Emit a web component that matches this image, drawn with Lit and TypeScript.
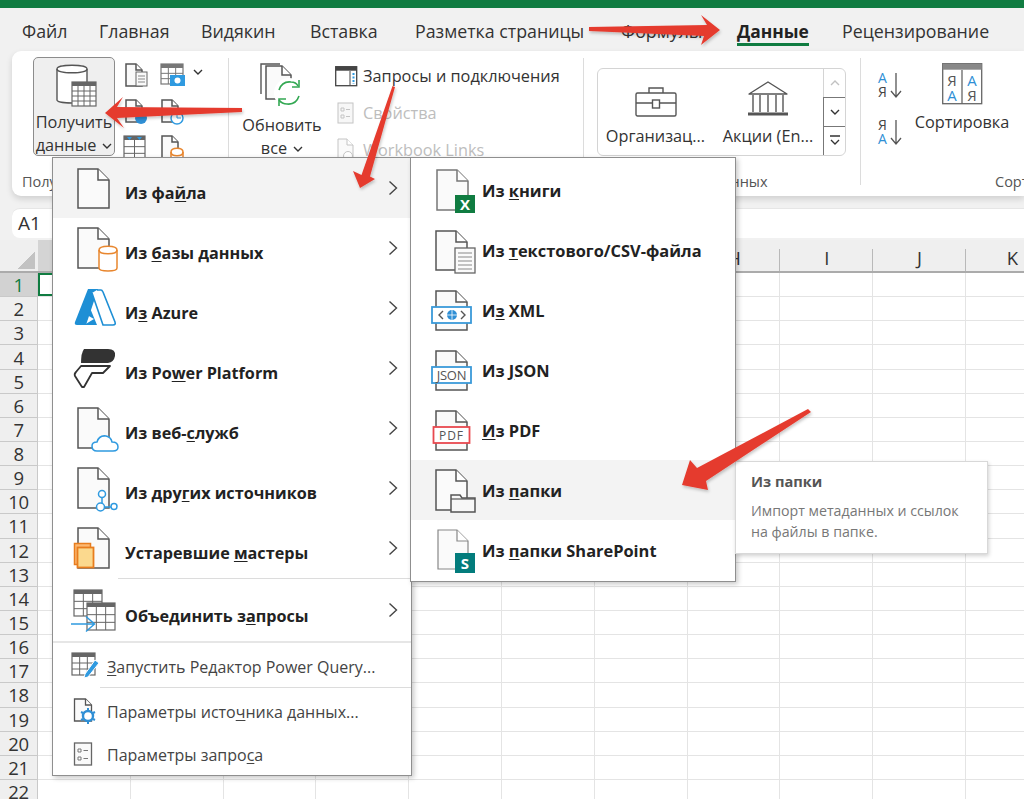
import { css, html, svg, LitElement } from "lit";
import { customElement } from "lit/decorators.js";
import { map } from "lit/directives/map.js";

const TABS = [
  "Файл",
  "Главная",
  "Видякин",
  "Вставка",
  "Разметка страницы",
  "Формулы",
  "Данные",
  "Рецензирование",
];

const COLS = "ABCDEFGHIJK".split("");
const ROWS = Array.from({ length: 22 }, (_, i) => i + 1);

const INK = "#555";

// page with a folded corner
const doc = (x: number, y: number, w: number, h: number, fold = 11, ink = INK, sw = 1.5) => svg`
  <path d="M${x} ${y}H${x + w - fold}L${x + w} ${y + fold}V${y + h}H${x}Z" fill="#fafafa" stroke=${ink} stroke-width=${sw} />
  <path d="M${x + w - fold} ${y}V${y + fold}H${x + w}" fill="#fff" stroke=${ink} stroke-width=${sw} />
`;

const table = (x: number, y: number, w: number, h: number, cols = 3, rows = 3, ink = "#666") => {
  const cw = w / cols;
  const rh = (h - 4) / rows;
  return svg`
    <rect x=${x} y=${y} width=${w} height=${h} fill="#fff" stroke=${ink} stroke-width="1.2" />
    <rect x=${x} y=${y} width=${w} height="4" fill=${ink} />
    ${map(Array.from({ length: cols - 1 }), (_, i) => svg`<path d="M${x + cw * (i + 1)} ${y + 4}V${y + h}" stroke=${ink} />`)}
    ${map(Array.from({ length: rows - 1 }), (_, i) => svg`<path d="M${x} ${y + 4 + rh * (i + 1)}H${x + w}" stroke=${ink} />`)}
  `;
};

const cylinder = (x: number, y: number, w: number, h: number, ink: string, fill = "#fff", sw = 1.5) => svg`
  <path d="M${x} ${y + 4}C${x} ${y - 1} ${x + w} ${y - 1} ${x + w} ${y + 4}V${y + h - 3}C${x + w} ${y + h + 1} ${x} ${y + h + 1} ${x} ${y + h - 3}Z" fill=${fill} stroke=${ink} stroke-width=${sw} />
  <path d="M${x} ${y + 4}C${x} ${y + 9} ${x + w} ${y + 9} ${x + w} ${y + 4}" fill="none" stroke=${ink} stroke-width=${sw} />
`;

const icon = (w: number, h: number, body: unknown) =>
  html`<svg class="ico" width=${w} height=${h} viewBox="0 0 ${w} ${h}">${body}</svg>`;

const chev = html`<svg class="chev" width="10" height="16" viewBox="0 0 10 16"><path d="M1.5 1.5L8.5 8L1.5 14.5" fill="none" stroke="#444" stroke-width="1.4" /></svg>`;
const caret = html`<svg class="caret" width="10" height="6" viewBox="0 0 10 6"><path d="M1 1L5 5L9 1" fill="none" stroke="#333" stroke-width="1.4" /></svg>`;

const dataBox = (x: number, w: number, ink: string, y = 19, h = 16) => svg`
  <rect x=${x} y=${y} width=${w} height=${h} fill="#fff" stroke=${ink} stroke-width="1.8" />
`;

const MAIN = [
  { label: html`Из фа<u>й</u>ла`, hot: true, ico: doc(8, 3, 31, 39) },
  { label: html`Из <u>б</u>азы данных`, ico: svg`${doc(8, 2, 31, 40)}${cylinder(29, 20, 18, 25, "#e8862e")}` },
  {
    label: html`И<u>з</u> Azure`,
    ico: svg`
      <path d="M18 3H28L16 39H7Q4 39 5 36Z" fill="#1e8fd5" />
      <path d="M20 22L27 39H14L24 33L17 29Z" fill="#1e8fd5" />
      <path d="M27 4H31Q32 4 33 6L45 36Q46 39 43 39H33L22 7" fill="#fff" stroke="#1e8fd5" stroke-width="1.6" />
    `,
  },
  {
    label: html`Из Po<u>w</u>er Platform`,
    ico: svg`
      <path d="M14 3H38Q46 3 45 10Q44 16 38 17H11Q11 7 14 3Z" fill="#333" />
      <path d="M11 20H40L33 27H22L14 41H12L5 30Q4 28 6 26Z" fill="#fff" stroke="#333" stroke-width="1.8" stroke-linejoin="round" />
    `,
  },
  {
    label: html`Из веб-<u>с</u>лужб`,
    ico: svg`
      ${doc(8, 2, 31, 40)}
      <path d="M27 45Q22 45 22 40Q22 36 27 36Q29 29 36 30Q41 31 42 36Q48 36 48 41Q48 45 43 45Z" fill="#fff" stroke="#2f9ae0" stroke-width="1.5" />
    `,
  },
  {
    label: html`Из дру<u>г</u>их источников`,
    ico: svg`
      ${doc(8, 2, 31, 40)}
      <path d="M32 32V37M34 41H41" stroke="#2f9ae0" stroke-width="1.5" />
      <circle cx="32" cy="28" r="3.5" fill="#fff" stroke="#2f9ae0" stroke-width="1.5" />
      <circle cx="30.5" cy="41" r="4" fill="#fff" stroke="#2f9ae0" stroke-width="1.5" />
      <circle cx="44" cy="40.5" r="3" fill="#fff" stroke="#2f9ae0" stroke-width="1.5" />
    `,
  },
  {
    label: html`Устаревшие <u>м</u>астеры`,
    ico: svg`
      ${doc(8, 2, 31, 40)}
      <rect x="4.5" y="17.5" width="16" height="21" fill="#fcb972" stroke="#e87d1e" stroke-width="1.5" />
      <rect x="7.5" y="21.5" width="16" height="20" fill="#fbd98e" stroke="#e87d1e" stroke-width="1.8" />
    `,
  },
  {
    label: html`Объединить з<u>а</u>просы`,
    tall: true,
    ico: svg`
      ${table(4, 2, 28, 26)}
      ${table(17, 15, 28, 27)}
      <path d="M1 36H24M16 28.5L24.5 36L16 43.5" fill="none" stroke="#2f9ae0" stroke-width="1.5" />
    `,
  },
];

const MINOR = [
  {
    label: html`<u>З</u>апустить Редактор Power Query...`,
    h: 44,
    ico: svg`
      ${table(2, 3, 23, 22, 3, 3)}
      <path d="M15 24L25 10L29 13L18 27L14 28Z" fill="#2f9ae0" stroke="#fff" />
    `,
  },
  {
    label: html`Параметры исто<u>ч</u>ника данных...`,
    h: 45,
    ico: svg`
      ${doc(4.5, 3, 17, 22, 6, "#555", 1.3)}
      <circle cx="18" cy="20" r="5" fill="#fff" stroke="#2f8fd5" stroke-width="2.4" />
      <path d="M18 12V14M18 26V28M11 16L13 17M25 24L23 23M11 24L13 23M25 16L23 17" stroke="#2f8fd5" stroke-width="2" />
    `,
  },
  {
    label: html`Параметры запро<u>с</u>а`,
    h: 41,
    ico: svg`
      <rect x="4.5" y="4" width="17" height="22" fill="#fafafa" stroke="#666" stroke-width="1.3" />
      <path d="M8 10h3v3h-3zM8 18h3v3h-3z" fill="#fff" stroke="#777" />
      <path d="M13.5 11.5H18M13.5 19.5H18" stroke="#777" />
    `,
  },
];

const globe = svg`
  <circle cx="27" cy="27" r="5" fill="#2f8fd5" />
  <path d="M22 27H32M27 22V32" stroke="#fff" stroke-width=".8" />
  <path d="M18 23L14 27L18 31M36 23L40 27L36 31" fill="none" stroke="#555" stroke-width="1.4" />
`;

const FILES = [
  {
    label: html`Из <u>к</u>ниги`,
    ico: svg`
      ${doc(12, 2, 31, 40, 11, "#777")}
      <rect x="30" y="27" width="20" height="18" fill="#107c41" />
      <text x="40" y="41.5" class="badge">X</text>
    `,
  },
  {
    label: html`Из <u>т</u>екстового/CSV-файла`,
    ico: svg`
      ${doc(11, 3, 31, 39)}
      <rect x="30" y="20" width="20" height="25" fill="#fafafa" stroke="#666" stroke-width="1.3" />
      <path d="M33 25H47M33 29H47M33 33H47M33 37H47M33 41H47" stroke="#888" />
    `,
  },
  {
    label: html`И<u>з</u> XML`,
    ico: svg`${doc(11, 3, 31, 39)}${dataBox(7, 39, "#3a9ad9")}${globe}`,
  },
  {
    label: html`Из <u>J</u>SON`,
    ico: svg`${doc(11, 3, 31, 39)}${dataBox(7, 39, "#3a9ad9")}<text x="26.5" y="32" class="tag" font-size="13" letter-spacing="-.3">JSON</text>`,
  },
  {
    label: html`<u>И</u>з PDF`,
    ico: svg`${doc(11, 3, 31, 39)}${dataBox(8.5, 36, "#e8494f")}<text x="26.5" y="32" class="tag" font-size="12" letter-spacing="1">PDF</text>`,
  },
  {
    label: html`Из <u>п</u>апки`,
    hot: true,
    ico: svg`
      ${doc(11, 2, 31, 40)}
      <path d="M26 44V27H35L37 30H50V44Z" fill="#f7f7f7" stroke="#555" stroke-width="1.5" />
      <path d="M26 31H50" stroke="#555" stroke-width="1.2" />
    `,
  },
  {
    label: html`Из <u>п</u>апки SharePoint`,
    ico: svg`
      ${doc(13, 2, 30, 39, 11, "#888", 1.2)}
      <rect x="30" y="25" width="20" height="20" fill="#037c7c" />
      <text x="40" y="41" class="badge">S</text>
    `,
  },
];

@customElement("app-root")
export class AppRoot extends LitElement {
  static styles = css`
    :host {
      display: block;
      position: relative;
      width: 1024px;
      height: 799px;
      overflow: hidden;
      background: #f1f1f1;
      font-family: "Open Sans", "Liberation Sans", sans-serif;
      color: #333;
    }
    svg {
      display: block;
      overflow: visible;
      flex: none;
    }
    svg text {
      font-family: "Open Sans", sans-serif;
      font-weight: 400;
    }
    svg text.badge {
      fill: #fff;
      font-size: 15px;
      font-weight: 700;
      text-anchor: middle;
    }
    .tag {
      fill: #555;
      text-anchor: middle;
    }
    .title {
      height: 8px;
      background: #107c41;
    }

    .tabs {
      display: grid;
      grid-template-columns: 77px 102px 109px 105px 206px 116px 105px 180px;
      height: 43px;
      padding-left: 22px;
      align-items: center;
      font-size: 17.8px;
    }
    .tab {
      position: relative;
      white-space: nowrap;
      padding-top: 2px;
    }
    .tab.on {
      font-weight: 700;
      font-size: 17.4px;
      color: #222;
      justify-self: start;
    }
    .tab.on::after {
      content: "";
      position: absolute;
      left: 0;
      right: 0;
      bottom: -3px;
      height: 3px;
      background: #107c41;
    }

    .ribbon {
      display: flex;
      height: 145px;
      margin-left: 12px;
      background: #fff;
      border-radius: 9px 0 0 9px;
      box-shadow: 0 3px 6px rgba(0, 0, 0, 0.14);
      font-size: 16.3px;
      overflow: hidden;
    }
    .sep {
      flex: none;
      width: 1px;
      height: 127px;
      margin-top: 7px;
      background: #dcdcdc;
    }
    .group {
      position: relative;
      flex: none;
      display: flex;
      flex-direction: column;
    }
    .g-body {
      flex: none;
      height: 121px;
      display: flex;
    }
    .g-name {
      font-size: 14.5px;
      color: #555;
      white-space: nowrap;
    }
    .g1 {
      width: 216px;
    }
    .g1 .g-name {
      padding-left: 10px;
    }
    .big {
      flex: none;
      width: 82px;
      height: 99px;
      margin: 6px 0 0 21px;
      box-sizing: border-box;
      border: 1px solid #8c8c8c;
      border-radius: 5px;
      background: #efefef;
      display: flex;
      flex-direction: column;
      align-items: center;
      line-height: 23px;
      text-align: center;
    }
    .big svg.ico {
      margin: 6px 0 3px 3px;
    }
    .big span,
    .refresh span {
      display: flex;
      align-items: center;
      gap: 6px;
      white-space: nowrap;
    }
    .smalls {
      display: grid;
      grid-template-columns: 36px 70px;
      grid-auto-rows: 37px;
      margin: 11px 0 0 9px;
    }
    .smalls .caret {
      margin: 7px 0 0 7px;
    }
    .pair {
      display: flex;
    }

    .g2 {
      width: 354px;
    }
    .g2 .g-body {
      padding-top: 12px;
      box-sizing: border-box;
    }
    .refresh {
      flex: none;
      width: 106px;
      display: flex;
      flex-direction: column;
      align-items: center;
      line-height: 23px;
    }
    .refresh svg.ico {
      margin-bottom: 7px;
    }
    .links {
      display: flex;
      flex-direction: column;
      gap: 15px;
      padding-top: 2px;
    }
    .link {
      display: flex;
      align-items: center;
      gap: 6px;
      height: 22px;
      white-space: nowrap;
    }
    .link.off {
      color: #bdbdbd;
    }

    .g3 {
      width: 276px;
    }
    .g3 .g-name {
      padding-left: 89px;
    }
    .gallery {
      flex: none;
      display: flex;
      width: 249px;
      height: 88px;
      margin: 17px 0 0 13px;
      box-sizing: border-box;
      border: 1px solid #d4d4d4;
      border-radius: 6px;
      overflow: hidden;
    }
    .gal {
      flex: none;
      display: flex;
      flex-direction: column;
      align-items: center;
      justify-content: flex-end;
      height: 78px;
      white-space: nowrap;
    }
    .gal svg.ico {
      margin-bottom: 8px;
    }
    .gal.org {
      width: 115px;
    }
    .gal.stock {
      width: 110px;
    }
    .spin {
      flex: none;
      width: 22px;
      margin-left: auto;
      display: flex;
      flex-direction: column;
      border-left: 1px solid #d4d4d4;
    }
    .spin div {
      flex: 1;
      display: flex;
      align-items: center;
      justify-content: center;
    }
    .spin div + div {
      border-top: 1px solid #777;
      margin-left: -1px;
      border-left: 1px solid #777;
    }
    .spin div:first-child svg {
      transform: scaleY(-1);
      opacity: 0.3;
    }

    .g4 {
      flex: 1;
    }
    .g4 .g-name {
      padding-left: 134px;
    }
    .az {
      flex: none;
      display: flex;
      flex-direction: column;
      gap: 21px;
      margin: 21px 0 0 17px;
    }
    .sort {
      flex: none;
      display: flex;
      flex-direction: column;
      align-items: center;
      width: 96px;
      margin: 12px 0 0 10px;
      white-space: nowrap;
    }
    .sort svg.ico {
      margin-bottom: 6px;
    }

    .formula {
      height: 30px;
      margin-top: 12px;
      background: #fff;
      border-top: 1px solid #e6e6e6;
      border-radius: 8px 0 0 8px;
      margin-left: 12px;
      font-size: 19px;
      line-height: 29px;
      padding-left: 6px;
      box-sizing: border-box;
    }

    .sheet {
      margin-top: 2px;
      display: grid;
      grid-template-columns: 38px repeat(11, 92.8px);
      grid-template-rows: 33px repeat(22, 24.15px);
      background: #fff;
    }
    .corner,
    .head {
      background: #efefef;
      border-bottom: 2px solid #ababab;
      box-sizing: border-box;
    }
    .corner {
      position: relative;
    }
    .corner::after {
      content: "";
      position: absolute;
      right: 3px;
      bottom: 2px;
      width: 17px;
      height: 17px;
      background: linear-gradient(135deg, transparent 50%, #c2c2c2 50%);
    }
    .head {
      display: flex;
      align-items: center;
      justify-content: center;
      font-size: 18.5px;
      padding-top: 4px;
      background-image: linear-gradient(#b9b9b9, #b9b9b9);
      background-size: 1px 22px;
      background-position: right bottom;
      background-repeat: no-repeat;
    }
    .head.sel {
      background-color: #d4d4d4;
    }
    .num {
      display: flex;
      align-items: center;
      justify-content: center;
      font-size: 18.5px;
      letter-spacing: -0.4px;
      background: #efefef;
      border-bottom: 1px solid #c9c9c9;
      border-right: 1px solid #c9c9c9;
      box-sizing: border-box;
    }
    .num.sel {
      background: #d2d2d2;
      color: #107c41;
    }
    .cell {
      border-right: 1px solid #e4e4e4;
      border-bottom: 1px solid #e4e4e4;
      box-sizing: border-box;
    }
    .cell.sel {
      box-shadow: inset 0 0 0 2px #107c41;
    }

    .menu {
      position: absolute;
      top: 157px;
      box-sizing: border-box;
      background: #fff;
      border: 1px solid #8f8f8f;
      box-shadow: 2px 2px 5px rgba(0, 0, 0, 0.22);
      font-size: 16.2px;
      color: #222;
    }
    .menu.main {
      left: 52px;
      width: 360px;
      height: 619px;
    }
    .menu.files {
      left: 410px;
      width: 326px;
      height: 425px;
      padding-top: 2px;
      font-size: 16.4px;
    }
    .row {
      display: flex;
      align-items: center;
      height: 60px;
      padding-left: 17px;
      font-weight: 700;
      white-space: nowrap;
    }
    .row.hot {
      background: #f3f3f3;
    }
    .row.tall {
      height: 62px;
    }
    .main .row .ico {
      margin-right: 7px;
    }
    .files .row {
      padding-left: 14px;
    }
    .files .row .ico {
      margin-right: 7px;
    }
    .files .label {
      padding-top: 1px;
    }
    .main .label {
      flex: 1;
      padding-top: 10px;
    }
    .main .tall .label {
      padding-top: 12px;
    }
    .row .chev {
      margin-right: 13px;
    }
    .rule {
      height: 1px;
      margin-left: 65px;
      background: #dcdcdc;
    }
    .rule.wide {
      height: 2px;
      margin-left: 0;
      background: #e6e6e6;
    }
    .rule.mid {
      margin-left: 47px;
    }
    .minor {
      display: flex;
      align-items: center;
      padding-left: 17px;
      font-size: 16px;
      color: #444;
      white-space: nowrap;
    }
    .minor .ico {
      margin-right: 7px;
    }
    .minor .label {
      margin-bottom: 7px;
    }
    u {
      text-underline-offset: 2px;
    }

    .tip {
      position: absolute;
      left: 735px;
      top: 461px;
      width: 253px;
      height: 93px;
      box-sizing: border-box;
      padding: 9px 15px;
      background: #fff;
      border: 1px solid #d8d8d8;
      box-shadow: 1px 2px 4px rgba(0, 0, 0, 0.18);
      font-size: 14.2px;
      line-height: 21px;
      color: #777;
    }
    .tip b {
      display: block;
      font-size: 14.6px;
      color: #555;
      margin-bottom: 8px;
    }
    .arrows {
      position: absolute;
      inset: 0;
      pointer-events: none;
    }
  `;

  render() {
    return html`
      <div class="title"></div>
      <div class="tabs">
        ${map(TABS, (name) => html`<div class="tab ${name === "Данные" ? "on" : ""}">${name}</div>`)}
      </div>
      ${this.renderRibbon()}
      <div class="formula">A1</div>
      <div class="sheet">
        <div class="corner"></div>
        ${map(COLS, (c) => html`<div class="head ${c === "A" ? "sel" : ""}">${c}</div>`)}
        ${map(
          ROWS,
          (r) => html`
            <div class="num ${r === 1 ? "sel" : ""}">${r}</div>
            ${map(COLS, (c) => html`<div class="cell ${r === 1 && c === "A" ? "sel" : ""}"></div>`)}
          `,
        )}
      </div>
      ${this.renderMenus()}
      <div class="tip">
        <b>Из папки</b>
        Импорт метаданных и ссылок<br />на файлы в папке.
      </div>
      <svg class="arrows" width="1024" height="799" viewBox="0 0 1024 799">
        <defs>
          <filter id="s" x="-10%" y="-10%" width="120%" height="120%">
            <feDropShadow dx="1" dy="2" stdDeviation="1.5" flood-color="#000" flood-opacity=".22" />
          </filter>
        </defs>
        <g fill="#e53b2f" filter="url(#s)">
          <path d="M589 27L707 25L701 15L720 30L701 45L704 36L589 31Z" />
          <path d="M242 108L117 107L123 97L105 113L124 128L117 118L242 112Z" />
          <path d="M392.5 86L361.5 175L353 171L360 188L375 179L370 176.5L395 87Z" />
          <path d="M808 409L697 468L690 460L682 485L708 490L706 481L811 412Z" />
        </g>
      </svg>
    `;
  }

  renderRibbon() {
    return html`
      <div class="ribbon">
        <div class="group g1">
          <div class="g-body">
            <div class="big">
              ${icon(
                42,
                44,
                svg`
                  ${cylinder(2, 1, 30, 38, "#555", "#fff", 1.4)}
                  ${table(17, 18, 24, 24, 4, 4)}
                `,
              )}
              <div>Получить</div>
              <span>данные ${caret}</span>
            </div>
            <div class="smalls">
              ${icon(26, 24, svg`${doc(2, 2, 16, 22, 6)}<rect x="12" y="10" width="11" height="14" fill="#fafafa" stroke="#666" /><path d="M14 14H21M14 17H21M14 20H21" stroke="#888" />`)}
              <div class="pair">
                ${icon(26, 24, svg`${table(1, 2, 22, 20, 3, 3, "#777")}<rect x="10" y="13" width="15" height="11" fill="#2f9ae0" /><circle cx="17.5" cy="18.5" r="3" fill="#fff" />`)}
                ${caret}
              </div>
              ${icon(26, 24, svg`${doc(2, 1, 16, 22, 6)}<circle cx="17" cy="19" r="6" fill="#2f8fd5" />`)}
              ${icon(26, 24, svg`${doc(2, 1, 16, 22, 6)}<circle cx="17" cy="19" r="6" fill="#fff" stroke="#2f9ae0" stroke-width="1.5" /><path d="M17 15V19H21" fill="none" stroke="#2f9ae0" />`)}
              ${icon(26, 24, svg`${table(0, 0, 21, 24, 2, 3)}<path d="M3 1L8 1L5.5 4ZM13 1L18 1L15.5 4Z" fill="#2f9ae0" />`)}
              ${icon(26, 24, svg`${doc(2, 0, 16, 24, 6)}${cylinder(11, 12, 12, 13, "#e8862e")}`)}
            </div>
          </div>
          <div class="g-name">Получить и преобразовать данные</div>
        </div>
        <div class="sep"></div>
        <div class="group g2">
          <div class="g-body">
            <div class="refresh">
              ${icon(
                44,
                44,
                svg`
                  <path d="M1 31V1H20" fill="none" stroke="#555" stroke-width="1.4" />
                  ${doc(6, 3, 25, 33, 9)}
                  <circle cx="29" cy="30" r="15" fill="#fff" />
                  <path d="M19 27Q22 18 31 19Q36 19 38 23M39 33Q36 42 27 41Q22 41 19 37" fill="none" stroke="#33a853" stroke-width="1.6" />
                  <path d="M39 17V24H32M19 43V36H26" fill="none" stroke="#33a853" stroke-width="1.6" />
                `,
              )}
              <div>Обновить</div>
              <span>все ${caret}</span>
            </div>
            <div class="links">
              <div class="link">
                ${icon(
                  22,
                  20,
                  svg`
                    <rect x=".7" y=".7" width="21" height="19" fill="#fff" stroke="#444" stroke-width="1.3" />
                    <rect x=".7" y=".7" width="21" height="4" fill="#444" />
                    <path d="M15 5V19" stroke="#444" />
                    <path d="M18.5 7V18" stroke="#2f9ae0" stroke-width="2" stroke-dasharray="2 1.5" />
                  `,
                )}
                Запросы и подключения
              </div>
              <div class="link off">
                ${icon(22, 22, svg`<rect x="3" y="1" width="15" height="20" fill="#f7f7f7" stroke="#c4c4c4" /><path d="M6 6h3v3h-3zM6 13h3v3h-3zM11 7.5H15M11 14.5H15" fill="none" stroke="#c4c4c4" />`)}
                Свойства
              </div>
              <div class="link off">
                ${icon(22, 22, svg`${doc(3, 0, 15, 21, 6, "#c4c4c4", 1)}<circle cx="13" cy="17" r="4.5" fill="#fff" stroke="#c4c4c4" />`)}
                Workbook Links
              </div>
            </div>
          </div>
        </div>
        <div class="sep"></div>
        <div class="group g3">
          <div class="g-body">
            <div class="gallery">
              <div class="gal org">
                ${icon(
                  42,
                  30,
                  svg`
                    <rect x="1" y="6" width="40" height="23" rx="1.5" fill="#fff" stroke="#555" stroke-width="1.4" />
                    <path d="M14 6V1H28V6M1 16H17M25 16H41" fill="none" stroke="#555" stroke-width="1.4" />
                    <rect x="17.5" y="13" width="7" height="8" fill="#fff" stroke="#555" stroke-width="1.4" />
                  `,
                )}
                <div>Организац...</div>
              </div>
              <div class="gal stock">
                ${icon(
                  42,
                  36,
                  svg`
                    <path d="M21 1L40 13H2Z" fill="#fff" stroke="#555" stroke-width="1.4" stroke-linejoin="round" />
                    <path d="M6 14V31M13 14V31M21 14V31M29 14V31M36 14V31" stroke="#555" stroke-width="1.4" />
                    <path d="M1 33H41" stroke="#555" stroke-width="3" />
                  `,
                )}
                <div>Акции (En...</div>
              </div>
              <div class="spin">
                <div>${caret}</div>
                <div>${caret}</div>
                <div>
                  <svg width="12" height="12" viewBox="0 0 12 12"><path d="M1 1H11M2 5L6 9L10 5" fill="none" stroke="#333" stroke-width="1.3" /></svg>
                </div>
              </div>
            </div>
          </div>
          <div class="g-name">Типы данных</div>
        </div>
        <div class="sep"></div>
        <div class="group g4">
          <div class="g-body">
            <div class="az">
              ${icon(
                26,
                26,
                svg`
                  <text x="0" y="11" font-size="14" fill="#2f8fd5">А</text>
                  <text x="0" y="25" font-size="14" fill="#444">Я</text>
                  <path d="M18 1V24M13 19L18 25L23 19" fill="none" stroke="#555" stroke-width="1.3" />
                `,
              )}
              ${icon(
                26,
                26,
                svg`
                  <text x="0" y="11" font-size="14" fill="#444">Я</text>
                  <text x="0" y="25" font-size="14" fill="#2f8fd5">А</text>
                  <path d="M18 1V24M13 19L18 25L23 19" fill="none" stroke="#555" stroke-width="1.3" />
                `,
              )}
            </div>
            <div class="sort">
              ${icon(
                40,
                42,
                svg`
                  <rect x=".7" y=".7" width="39" height="40" fill="#fff" stroke="#666" stroke-width="1.3" />
                  <rect x=".7" y=".7" width="39" height="6" fill="#888" />
                  <path d="M20 7V41" stroke="#666" stroke-width="1.3" />
                  <text x="10" y="23" class="tag" font-size="15">Я</text>
                  <text x="10" y="38" class="tag" font-size="15" style="fill:#2f8fd5">А</text>
                  <text x="30" y="23" class="tag" font-size="15" style="fill:#2f8fd5">А</text>
                  <text x="30" y="38" class="tag" font-size="15">Я</text>
                `,
              )}
              <div>Сортировка</div>
            </div>
          </div>
          <div class="g-name">Сортировка и фильтр</div>
        </div>
      </div>
    `;
  }

  renderMenus() {
    return html`
      <div class="menu main">
        ${map(
          MAIN,
          (item) => html`
            ${item.tall ? html`<div class="rule"></div>` : ""}
            <div class="row ${item.hot ? "hot" : ""} ${item.tall ? "tall" : ""}">
              ${icon(48, 44, item.ico)}
              <div class="label">${item.label}</div>
              ${chev}
            </div>
          `,
        )}
        <div class="rule wide"></div>
        <div class="minor" style="height:${MINOR[0].h}px">${icon(30, 30, MINOR[0].ico)}<div class="label">${MINOR[0].label}</div></div>
        <div class="rule mid"></div>
        <div class="minor" style="height:${MINOR[1].h}px">${icon(30, 30, MINOR[1].ico)}<div class="label">${MINOR[1].label}</div></div>
        <div class="minor" style="height:${MINOR[2].h}px">${icon(30, 30, MINOR[2].ico)}<div class="label">${MINOR[2].label}</div></div>
      </div>
      <div class="menu files">
        ${map(
          FILES,
          (item) => html`
            <div class="row ${item.hot ? "hot" : ""}">
              ${icon(50, 44, item.ico)}
              <div class="label">${item.label}</div>
            </div>
          `,
        )}
      </div>
    `;
  }
}
